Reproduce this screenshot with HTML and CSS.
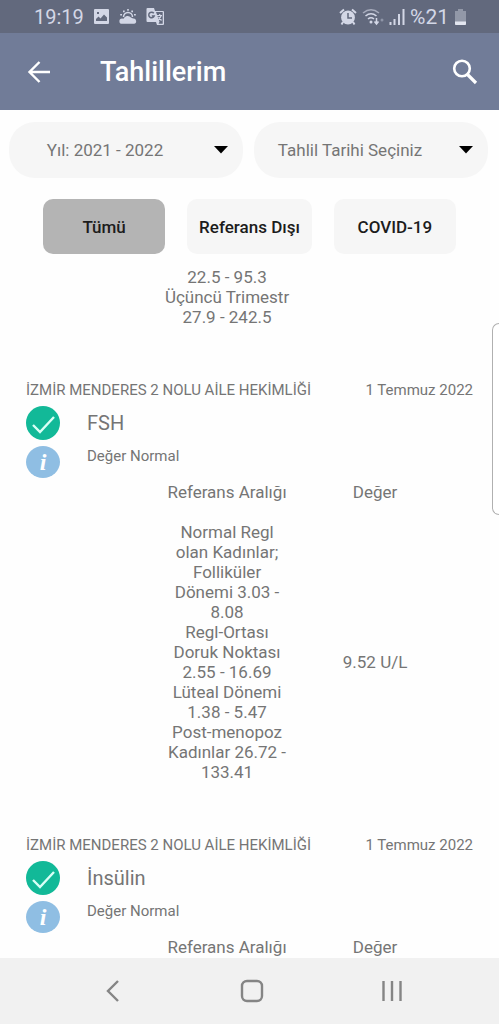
FILE: index.html
```html
<!DOCTYPE html>
<html lang="tr">
<head>
<meta charset="utf-8">
<meta name="viewport" content="width=device-width, initial-scale=1">
<title>Tahlillerim</title>
<link rel="stylesheet" href="styles.css">
</head>
<body class="screen">
<div class="status">
  <div class="status-group">
    <span>19:19</span>
    <svg width="17" height="17" viewBox="0 0 17 17"><path fill="currentColor" fill-rule="evenodd" d="M2 1h13q1 0 1 1v13q0 1-1 1H2q-1 0-1-1V2q0-1 1-1zM3 13h11V9.500l-3-3-3.500 4-2-2L3 11zM4 4v2h2V4z"/></svg>
    <svg width="18" height="17" viewBox="0 0 18 17"><path d="M4.500 9a4.500 4.500 0 0 1 9 0" fill="none" stroke="currentColor" stroke-width="1.500"/><path d="M8.200 1h1.600v1.800H8.200zM4 2.500h1.700v1.700H4zM12.300 2.500H14v1.700h-1.700zM1.200 6H3v1.600H1.200zM15 6h1.800v1.600H15z" fill="currentColor"/><path fill="currentColor" d="M3 15.800a2.600 2.600 0 0 1 0-5.200l1.500.2A4.500 4.500 0 0 1 12 9.500l2 1.100a2.600 2.600 0 0 1 1 5.200z"/></svg>
    <svg width="19" height="19" viewBox="0 0 19 19"><path fill="currentColor" d="M1.500 1H8l1 3h8q1 0 1 1v12q0 1-1 1h-6l-1-3H1.500Q.500 15 .500 14V2q0-1 1-1z"/><path fill="#62697d" d="M10 5h6.700v11.700h-4.200l1-2z"/><path d="M7.800 6.200A2.800 2.800 0 1 0 8.200 9H5.800" fill="none" stroke="#62697d" stroke-width="1.500"/><path d="M11 8.500h5M13.700 7v1.500M15.200 8.500q-1 3-3 4M12.500 10l3 3.500" fill="none" stroke="currentColor" stroke-width="1.200"/></svg>
  </div>
  <div class="status-group">
    <svg width="18" height="18" viewBox="0 0 18 18"><circle cx="9" cy="9.500" r="6.900" fill="currentColor"/><path d="M1 5l4-3.500M17 5l-4-3.500M4 14l-1.500 2.500M14 14l1.500 2.500" stroke="currentColor" stroke-width="2"/><path d="M9 5v5h4" fill="none" stroke="#62697d" stroke-width="1.500"/></svg>
    <svg width="22" height="18" viewBox="0 0 22 18"><g fill="none" stroke="currentColor" stroke-width="1.600"><path d="M1 5q8-6.500 16 0" opacity=".6"/><path d="M3.500 8q5.500-4.500 11 0M6 11q3-2.500 6 0"/></g><circle cx="9" cy="14" r="1.500" fill="currentColor"/><path d="M14.500 10v5M12.500 13.500l2 2.500 2-2.500" fill="none" stroke="currentColor" stroke-width="1.500"/><circle cx="20" cy="12" r="1.500" fill="currentColor" opacity=".4"/></svg>
    <svg width="16" height="17" viewBox="0 0 16 17"><path d="M1.500 14v3M5.500 11v6M10 6v11M14.500 1v16" stroke="currentColor" stroke-width="2"/></svg>
    <span class="percent">%21</span>
    <svg width="13" height="18" viewBox="0 0 13 18"><path d="M4 1h5v2h3v13q0 1-1 1H2q-1 0-1-1V3h3z" fill="#9298a8"/><path d="M1 13.500h11V16q0 1-1 1H2q-1 0-1-1z" fill="#e3e6f0"/></svg>
  </div>
</div>

<header class="appbar">
  <button class="icon-btn" aria-label="Geri"><svg width="24" height="24" viewBox="0 0 24 24"><path d="M23 12H3M12.500 2L2.500 12l10 10" fill="none" stroke="#fff" stroke-width="2.400"/></svg></button>
  <h1 class="title">Tahlillerim</h1>
  <button class="icon-btn" aria-label="Ara"><svg width="26" height="26" viewBox="0 0 26 26"><circle cx="10" cy="9.500" r="7.800" fill="none" stroke="#fff" stroke-width="2.600"/><path d="M15.500 15.500l8.500 8.500" stroke="#fff" stroke-width="3.200"/></svg></button>
</header>

<div class="filters">
  <div class="picker">
    <select class="picker-select" aria-label="Yıl"><option>Yıl: 2021 - 2022</option></select>
    <svg class="picker-arrow" width="14" height="8" viewBox="0 0 14 8"><path d="M0 0h14L7 7.500z"/></svg>
  </div>
  <div class="picker">
    <select class="picker-select" aria-label="Tahlil Tarihi"><option>Tahlil Tarihi Seçiniz</option></select>
    <svg class="picker-arrow" width="14" height="8" viewBox="0 0 14 8"><path d="M0 0h14L7 7.500z"/></svg>
  </div>
</div>

<div class="chips">
  <button class="chip chip-on">Tümü</button>
  <button class="chip">Referans Dışı</button>
  <button class="chip">COVID-19</button>
</div>

<main class="results">
  <section class="result">
    <table class="values">
      <tbody><tr><td></td><td class="range">22.5 - 95.3<br>Üçüncü Trimestr<br>27.9 - 242.5</td><td></td></tr></tbody>
    </table>
  </section>

  <section class="result">
    <div class="meta"><span>İZMİR MENDERES 2 NOLU AİLE HEKİMLİĞİ</span><span>1 Temmuz 2022</span></div>
    <div class="summary">
      <svg width="34" height="34" viewBox="0 0 34 34"><circle cx="17" cy="17" r="17" fill="#12b998"/><path d="M7 19l7 7 14-15" fill="none" stroke="#d9fff6" stroke-width="2.400"/></svg>
      <h2 class="name">FSH</h2>
      <svg width="34" height="32" viewBox="0 0 34 32"><ellipse cx="17" cy="16" rx="17" ry="16" fill="#8fbee3"/><text x="17" y="24" text-anchor="middle" class="info-letter">i</text></svg>
      <p class="state">Değer Normal</p>
    </div>
    <table class="values">
      <thead><tr><td></td><th>Referans Aralığı</th><th>Değer</th></tr></thead>
      <tbody><tr><td></td><td class="range">Normal Regl<br>olan Kadınlar;<br>Folliküler<br>Dönemi 3.03 -<br>8.08<br>Regl-Ortası<br>Doruk Noktası<br>2.55 - 16.69<br>Lüteal Dönemi<br>1.38 - 5.47<br>Post-menopoz<br>Kadınlar 26.72 -<br>133.41</td><td>9.52 U/L</td></tr></tbody>
    </table>
  </section>

  <section class="result">
    <div class="meta"><span>İZMİR MENDERES 2 NOLU AİLE HEKİMLİĞİ</span><span>1 Temmuz 2022</span></div>
    <div class="summary">
      <svg width="34" height="34" viewBox="0 0 34 34"><circle cx="17" cy="17" r="17" fill="#12b998"/><path d="M7 19l7 7 14-15" fill="none" stroke="#d9fff6" stroke-width="2.400"/></svg>
      <h2 class="name">İnsülin</h2>
      <svg width="34" height="32" viewBox="0 0 34 32"><ellipse cx="17" cy="16" rx="17" ry="16" fill="#8fbee3"/><text x="17" y="24" text-anchor="middle" class="info-letter">i</text></svg>
      <p class="state">Değer Normal</p>
    </div>
    <table class="values">
      <thead><tr><td></td><th>Referans Aralığı</th><th>Değer</th></tr></thead>
    </table>
  </section>
</main>

<nav class="navbar">
  <button class="icon-btn" aria-label="Geri git"><svg width="24" height="24" viewBox="0 0 24 24"><path d="M18 2L8 12l10 10" fill="none" stroke="#858585" stroke-width="2.400"/></svg></button>
  <button class="icon-btn" aria-label="Ana ekran"><svg width="24" height="24" viewBox="0 0 24 24"><rect x="2" y="2" width="20" height="20" rx="5" fill="none" stroke="#858585" stroke-width="2.400"/></svg></button>
  <button class="icon-btn" aria-label="Son uygulamalar"><svg width="24" height="24" viewBox="0 0 24 24"><path d="M3.500 2v20M12 2v20M20.500 2v20" stroke="#858585" stroke-width="2.400"/></svg></button>
</nav>
<div class="edge-panel"></div>
</body>
</html>
```
FILE: styles.css
```css
* { box-sizing: border-box; }

.screen {
  margin: 0;
  height: 100vh;
  display: flex;
  flex-direction: column;
  position: relative;
  overflow: hidden;
  background: #fefefe;
  color: #757575;
  font: 17px/20px Roboto, sans-serif;
}

svg { display: block; flex: none; }

.status {
  display: flex;
  justify-content: space-between;
  align-items: center;
  height: 33px;
  flex: none;
  padding: 0 32px 0 34px;
  background: #62697d;
  color: #d3d7e6;
  font-size: 20px;
}
.status-group { display: flex; align-items: center; gap: 9px; }
.status-group + .status-group { gap: 5px; }
.percent { font-size: 21px; }

.appbar {
  display: flex;
  align-items: center;
  flex: none;
  height: 77px;
  padding: 0 21px 0 27px;
  background: #717c98;
}
.title {
  flex: 1;
  margin: 0 0 0 49px;
  color: #fff;
  font-size: 27px;
  font-weight: 500;
  line-height: 32px;
}
.icon-btn { padding: 0; border: 0; background: none; }

.filters {
  display: flex;
  gap: 11px;
  flex: none;
  padding: 12px 11px 0 9px;
}
.picker { flex: 1; position: relative; }
.picker-select {
  width: 100%;
  height: 56px;
  padding: 0 42px 0 0;
  border: 0;
  border-radius: 26px;
  appearance: none;
  background: #f6f6f6;
  color: #757575;
  font: inherit;
  text-align: center;
  text-align-last: center;
}
.picker-arrow { position: absolute; right: 15px; top: 24px; pointer-events: none; }

.chips {
  display: flex;
  justify-content: center;
  gap: 22px;
  flex: none;
  padding: 21px 0 11px;
}
.chip {
  min-width: 122px;
  height: 55px;
  padding: 0 12px;
  border: 0;
  border-radius: 10px;
  background: #f6f6f6;
  color: #1c1c1c;
  font: 500 17px/20px Roboto, sans-serif;
}
.chip-on { background: #b4b4b4; }

.results { flex: 1; min-height: 0; overflow: hidden; }
.result { padding-bottom: 32px; }

.meta {
  display: flex;
  justify-content: space-between;
  padding: 0 26px;
  font-size: 15px;
}
.summary {
  display: grid;
  grid-template-columns: 34px 1fr;
  gap: 6px 27px;
  padding: 6px 26px 4px;
}
.name { margin: 0; align-self: center; font-size: 20px; font-weight: 400; }
.state { margin: 0; font-size: 15px; }
.info-letter {
  fill: #fff;
  font: italic bold 24px "Liberation Serif", serif;
}

.values {
  width: 89%;
  margin-left: 1%;
  table-layout: fixed;
  border-collapse: collapse;
  text-align: center;
}
.values th, .values td { padding: 0; font-weight: 400; }
.values thead th { padding-bottom: 18px; }
.values .range { padding: 2px 0 21px; vertical-align: top; white-space: nowrap; }

.navbar {
  display: flex;
  justify-content: space-between;
  align-items: center;
  flex: none;
  height: 66px;
  padding: 0 95px 0 100px;
  background: #f1f1f1;
}

.edge-panel {
  position: absolute;
  right: 0;
  top: 323px;
  width: 7px;
  height: 192px;
  border: 1px solid #b0b0b0;
  border-right: 0;
  border-radius: 7px 0 0 7px;
  background: #fff;
}
```
